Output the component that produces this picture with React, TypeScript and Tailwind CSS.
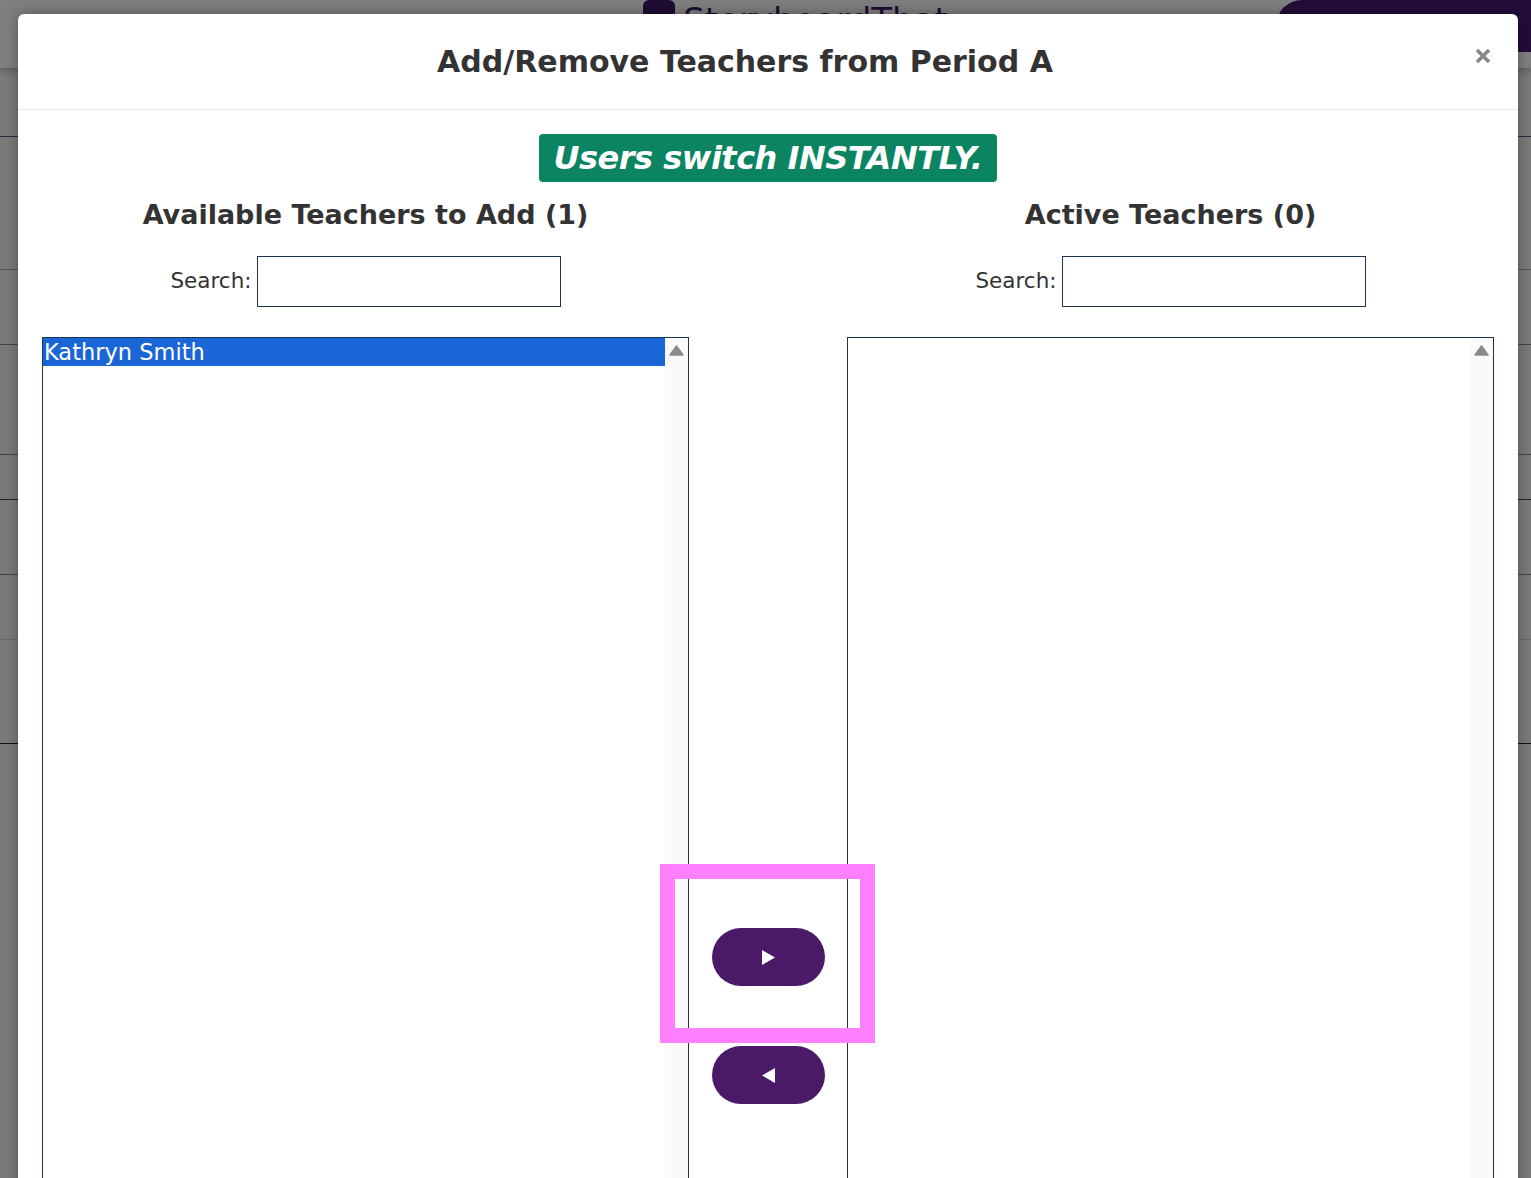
import React from "react";

const FONT = "font-['DejaVu_Sans','Inter',sans-serif]";

const ScrollTrack: React.FC = () => (
    <div className="w-[23px] bg-[#fafafa] flex justify-center pt-[7px]">
        <svg width="15" height="11" viewBox="0 0 15 11">
            <path d="M7.5 1 L14 10 L1 10 Z" fill="#8a8a8a" stroke="#8a8a8a" strokeWidth="1.5" strokeLinejoin="round"/>
        </svg>
    </div>
)

interface SelectBoxProps {
    items: string[]
}

const SelectBox: React.FC<SelectBoxProps> = ({items}) => (
    <div className="flex h-[900px] border border-[#1e3550] bg-white">
        <div className="flex-1">
            {items.map(item => (
                <div key={item}
                     className="h-[28px] bg-[#1b66d6] pl-[1px] text-[22.5px] leading-[28px] text-white">
                    {item}
                </div>
            ))}
        </div>
        <ScrollTrack/>
    </div>
)

const SearchRow: React.FC = () => (
    <div className="mt-[23px] flex items-center justify-center gap-[5px]">
        <label className="text-[21.5px] text-[#333]">Search:</label>
        <input className="h-[51px] w-[304px] border border-[#1e3550] bg-white outline-none"/>
    </div>
)

const ArrowButton: React.FC<{ dir: "right" | "left" }> = ({dir}) => (
    <button className="flex h-[58px] w-[113px] items-center justify-center rounded-full bg-[#4a1a68]">
        <svg width="15" height="15" viewBox="0 0 15 15">
            {dir === "right"
                ? <path d="M1 0 L14 7.5 L1 15 Z" fill="white"/>
                : <path d="M14 0 L1 7.5 L14 15 Z" fill="white"/>}
        </svg>
    </button>
)

const Backdrop: React.FC = () => (
    <div className="flex flex-col">
        <div className="relative h-[68px] bg-[#7f7f7f] shadow-[0_4px_6px_rgba(0,0,0,0.2)]">
            <div className="flex items-start justify-center gap-[8px]">
                <div className="ml-[60px] h-[40px] w-[32px] rounded-[6px] bg-[#1f0d33]"/>
                <span className="text-[34px] leading-[40px] text-[#1f0d33]">StoryboardThat</span>
            </div>
            <div className="absolute right-[-20px] top-0 h-[52px] w-[275px] rounded-bl-[40px] rounded-tl-[40px] bg-[#230d38]"/>
        </div>
        <div className="h-[69px] border-b border-[#2a2a40]"/>
        <div className="h-[133px] border-b border-[#555]"/>
        <div className="h-[75px] border-b border-[#444]"/>
        <div className="h-[110px] border-b border-[#444]"/>
        <div className="h-[45px] border-b border-[#222]"/>
        <div className="h-[75px] border-b border-[#444]"/>
        <div className="h-[65px] border-b border-[#666]"/>
        <div className="h-[104px] border-b border-[#111]"/>
    </div>
)

export default function App() {
    return (
        <div className={`relative h-[1178px] w-full overflow-hidden bg-[#7a7a7a] ${FONT}`}>
            <Backdrop/>

            <div
                className="absolute left-[18px] top-[14px] w-[1500px] rounded-t-[6px] bg-white shadow-[0_0_14px_rgba(0,0,0,0.35)]">
                <div className="relative flex h-[96px] items-center justify-center border-b border-[#e8e8e8] pr-[46px]">
                    <h1 className="text-[30px] font-semibold text-[#333]">
                        Add/Remove Teachers from Period A
                    </h1>
                    <button className="absolute right-[27px] top-[34px]">
                        <svg width="16" height="16" viewBox="0 0 16 16">
                            <path d="M2 2 L14 14 M14 2 L2 14" stroke="#888" strokeWidth="3.6"/>
                        </svg>
                    </button>
                </div>

                <div className="px-[24px] pt-[24px]">
                    <div className="flex justify-center">
                        <div className="flex h-[48px] items-center rounded-[4px] bg-[#0b8462] px-[15px]">
                            <span className="text-[32px] font-bold italic tracking-[-0.5px] text-white">
                                Users switch INSTANTLY.
                            </span>
                        </div>
                    </div>

                    <div className="grid grid-cols-[647px_158px_647px]">
                        <div>
                            <h2 className="mt-[15px] text-center text-[27px] font-bold leading-[36px] text-[#333]">
                                Available Teachers to Add (1)
                            </h2>
                            <SearchRow/>
                            <div className="mt-[30px]">
                                <SelectBox items={["Kathryn Smith"]}/>
                            </div>
                        </div>

                        <div className="flex flex-col items-center gap-[60px] pt-[746px]">
                            <ArrowButton dir="right"/>
                            <ArrowButton dir="left"/>
                        </div>

                        <div>
                            <h2 className="mt-[15px] text-center text-[27px] font-bold leading-[36px] text-[#333]">
                                Active Teachers (0)
                            </h2>
                            <SearchRow/>
                            <div className="mt-[30px]">
                                <SelectBox items={[]}/>
                            </div>
                        </div>
                    </div>
                </div>
            </div>

            <div className="absolute left-[660px] top-[864px] h-[179px] w-[215px] border-[15px] border-[#ff80ff]"/>
        </div>
    )
}
